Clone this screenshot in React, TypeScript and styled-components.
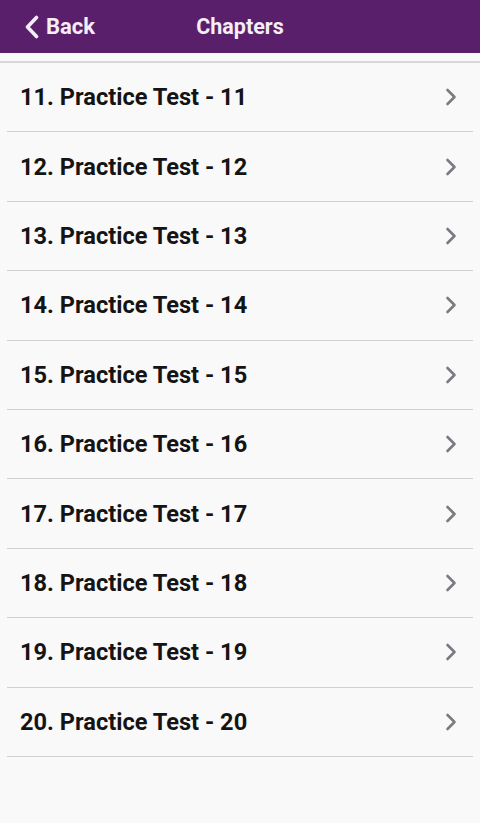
import React from "react";
import styled, { createGlobalStyle } from "styled-components";

const Global = createGlobalStyle`
  html, body { margin: 0; padding: 0; background: #f9f9f9; }
  body { font-family: Roboto, "Noto Sans", sans-serif; }
`;

const Page = styled.div`
  width: 480px;
  min-height: 823px;
  background: #f9f9f9;
  display: flex;
  flex-direction: column;
`;

const Header = styled.header`
  height: 53px;
  background: #5a1f6b;
  color: #fff;
  display: grid;
  grid-template-columns: 1fr auto 1fr;
  align-items: center;
  box-sizing: border-box;
`;

const BackButton = styled.div`
  display: flex;
  align-items: center;
  gap: 6px;
  padding-left: 24px;
  font-size: 22px;
  font-weight: 700;
  color: #f4eef6;
`;

const Title = styled.div`
  font-size: 21.5px;
  font-weight: 700;
  color: #f4eef6;
`;

const List = styled.ul`
  list-style: none;
  margin: 8px 0 0;
  padding: 0 7px;
  border-top: 2px solid #d8d8d8;
`;

const Row = styled.li`
  height: 69.4px;
  box-sizing: border-box;
  border-bottom: 1.5px solid #d0d0d0;
  display: flex;
  align-items: center;
  justify-content: space-between;
  padding: 0 16px 0 13px;
`;

const Label = styled.span`
  font-size: 23.6px;
  font-weight: 700;
  color: #141414;
`;

const Chevron = () => (
  <svg width="12" height="18" viewBox="0 0 12 18">
    <path d="M2.5 2 L9.5 9 L2.5 16" fill="none" stroke="#7b7b82" strokeWidth="2.6" strokeLinecap="round" strokeLinejoin="round" />
  </svg>
);

const BackChevron = () => (
  <svg width="16" height="24" viewBox="0 0 16 24">
    <path d="M12.5 2.5 L3.5 12 L12.5 21.5" fill="none" stroke="#f4eef6" strokeWidth="3.6" strokeLinecap="round" strokeLinejoin="round" />
  </svg>
);

const items = Array.from({ length: 10 }, (_, i) => i + 11);

export default function App() {
  return (
    <Page>
      <Global />
      <Header>
        <BackButton>
          <BackChevron />
          <span>Back</span>
        </BackButton>
        <Title>Chapters</Title>
        <div />
      </Header>
      <List>
        {items.map((n) => (
          <Row key={n}>
            <Label>{n}. Practice Test - {n}</Label>
            <Chevron />
          </Row>
        ))}
      </List>
    </Page>
  );
}
